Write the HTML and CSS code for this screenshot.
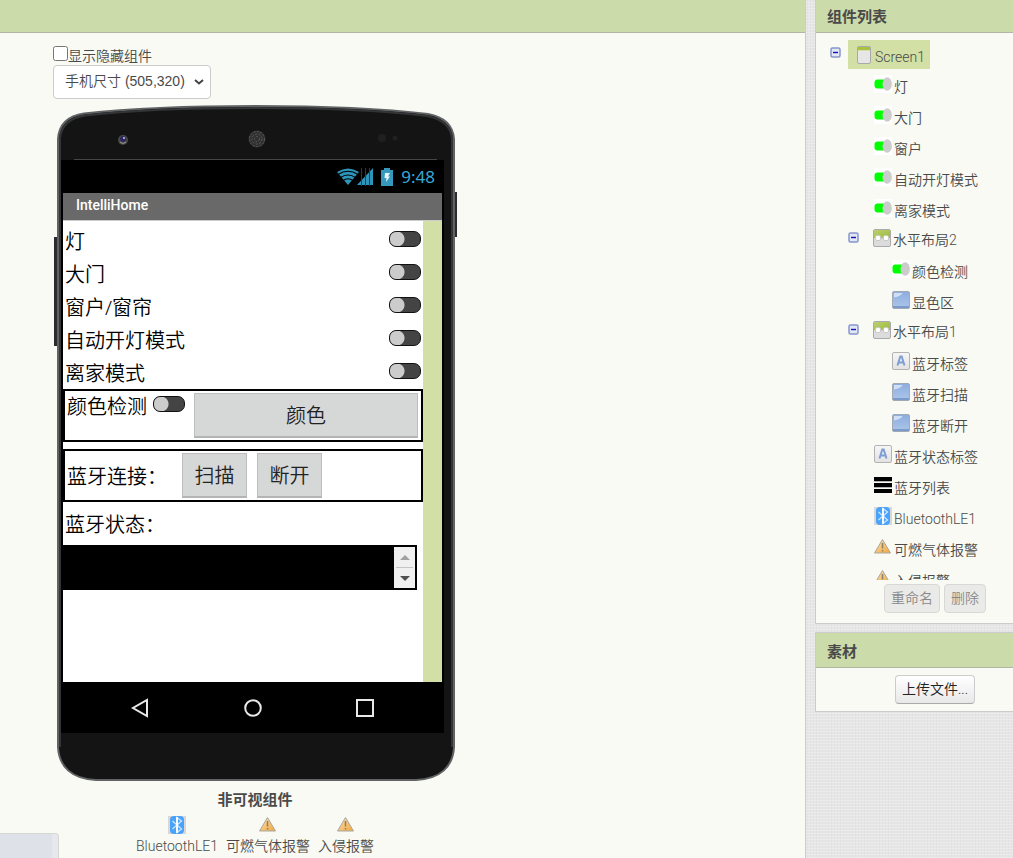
FILE: index.html
```html
<!DOCTYPE html>
<html lang="zh-CN">
<head>
<meta charset="utf-8">
<title>IntelliHome</title>
<link rel="stylesheet" href="styles.css">
</head>
<body>
<svg class="defs" aria-hidden="true">
  <defs>
    <linearGradient id="g-blue" x1="0" y1="0" x2="0" y2="1"><stop offset="0" stop-color="#8dade0"/><stop offset="1" stop-color="#acc6e8"/></linearGradient>
    <linearGradient id="g-green" x1="0" y1="0" x2="1" y2="1"><stop offset="0" stop-color="#bccf74"/><stop offset="1" stop-color="#9cbc35"/></linearGradient>
    <linearGradient id="g-warn" x1="0" y1="0" x2="1" y2="1"><stop offset="0" stop-color="#fbe3b4"/><stop offset="1" stop-color="#f0a63c"/></linearGradient>
    <linearGradient id="g-label" x1="0" y1="0" x2="0" y2="1"><stop offset="0" stop-color="#f6f6f6"/><stop offset="1" stop-color="#e2e2e2"/></linearGradient>
  </defs>
  <symbol id="i-screen" viewBox="0 0 18 18"><rect x="2.5" y="0.5" width="13" height="17" rx="1.5" fill="#e6e6e6" stroke="#a9a9a9"/><path d="M3 1h12v3H3z" fill="#a9c23f"/><path d="M3 4h12v1H3z" fill="#d6dfb0"/></symbol>
  <symbol id="i-switch" viewBox="0 0 18 18"><path d="M0 0h18v18H0z" fill="#fff"/><rect x="0.5" y="4.500" width="14" height="9" rx="3" fill="#0f0"/><ellipse cx="13.200" cy="9" rx="4.700" ry="6.700" fill="#ccc"/></symbol>
  <symbol id="i-layout" viewBox="0 0 18 18"><rect x="0.5" y="0.5" width="17" height="17" rx="1.500" fill="#dcdcdc" stroke="#aaa"/><path d="M1 1h16v8H1z" fill="url(#g-green)"/><rect x="2.500" y="6.500" width="5" height="5" rx="1.500" fill="#fff" stroke="#c9c9c9"/><rect x="10.500" y="6.500" width="5" height="5" rx="1.500" fill="#fff" stroke="#c9c9c9"/><path d="M8 9h2" stroke="#bbb"/></symbol>
  <symbol id="i-button" viewBox="0 0 18 18"><rect x="0.5" y="0.5" width="17" height="17" rx="1.500" fill="url(#g-blue)" stroke="#a2a9b4"/><path d="M2 2h8.500Q9 5 2 6.500z" fill="#cfdff5"/><path d="M1 15h16v2H1z" fill="#7b9bcd"/></symbol>
  <symbol id="i-label" viewBox="0 0 18 18"><rect x="0.5" y="0.5" width="17" height="17" rx="1.500" fill="url(#g-label)" stroke="#b3b3b3"/><path d="M5.500 13.500L8.300 4.500h1.400l2.800 9M6.500 10.500h5" fill="none" stroke="#7f9fd4" stroke-width="2"/></symbol>
  <symbol id="i-list" viewBox="0 0 18 18"><path d="M0 1h18v4H0zM0 7h18v4H0zM0 13h18v4H0z"/><path d="M0 5h18v1H0zM0 11h18v1H0z" fill="#b5b5b5"/></symbol>
  <symbol id="i-bt" viewBox="0 0 18 18"><path d="M0 0h18v18H0z" fill="#d8d8d8"/><rect x="2" y="0" width="14" height="18" rx="4" fill="#4aa3fb"/><path d="M4.500 5l9 8L9 16.500V1.500L13.500 5l-9 8" fill="none" stroke="#cde5ff" stroke-width="1.300"/><path d="M9 1v16" stroke="#fff" stroke-width="1.800"/></symbol>
  <symbol id="i-warn" viewBox="0 0 18 18"><path d="M8.500 1.500l8 13.500H0.500z" fill="url(#g-warn)" stroke="#aaa69f" stroke-linejoin="round"/><path d="M8.500 5v5.500M8.500 12v1.500" stroke="#8c8068" stroke-width="1.500"/></symbol>
  <symbol id="i-minus" viewBox="0 0 11 11"><rect x="1" y="1" width="9" height="9" rx="1.500" fill="#e3e7f5" stroke="#8795cb" stroke-width="1.500"/><path d="M3 5.500h5" stroke="#1212b8" stroke-width="1.400"/></symbol>
</svg>

<div class="workspace">
  <main class="viewer">
    <header class="panel-head"></header>
    <div class="canvas">
      <label class="show-hidden"><input type="checkbox"><span>显示隐藏组件</span></label>
      <div class="select-wrap">
        <select class="size-select" aria-label="手机尺寸"><option>手机尺寸 (505,320)</option></select>
        <svg class="chevron" viewBox="0 0 10 6" aria-hidden="true"><path d="M1 1l4 3.500L9 1" fill="none" stroke="#444" stroke-width="2"/></svg>
      </div>

      <div class="phone">
        <svg class="phone-frame" viewBox="0 0 404 676" preserveAspectRatio="none" aria-hidden="true">
          <path d="M1 132h5v109H1zM400 87h4v45h-4z" fill="#2b2b2d"/>
          <path d="M5 34C6 20 14 11 31 8.500C80 3 140 1 202 1C264 1 325 3 375 9C391 12 400 20 401 34V642C400 662 387 674 363 675H43C19 674 6 662 5 642Z" fill="#141414" stroke="#606264" stroke-width="2"/>
          <path d="M7 34C8 21 16 13 32 10.500C80 5 140 3 202 3C264 3 325 5 374 11C389 14 398 21 399 34V642" fill="none" stroke="#343537" stroke-width="2"/>
          <path d="M7 34V642" stroke="#343537" stroke-width="2"/>
          <circle cx="70" cy="35" r="5" fill="#4c4845"/><circle cx="70" cy="34" r="3" fill="#29295e"/><circle cx="71" cy="33" r="1" fill="#c8c8f4"/><path d="M67 37q3 3 6 0" stroke="#999" fill="none"/>
          <circle cx="204" cy="34" r="8.500" fill="#303030"/><g fill="none" stroke="#5c5c5c" stroke-dasharray="2 1.500"><circle cx="204" cy="34" r="7.500"/><circle cx="204" cy="34" r="5"/><circle cx="204" cy="34" r="2.500"/></g>
          <circle cx="329" cy="33" r="4" fill="#202020"/><circle cx="342" cy="33" r="2.500" fill="#202020"/>
          <path d="M21 54.500h363" stroke="#464646"/>
        </svg>
        <div class="display">
          <div class="status">
            <svg width="36" height="18" viewBox="0 0 36 18" aria-hidden="true"><path d="M0 4Q11-3 22 4L11 17Z" fill="#2f94ba"/><path d="M1 6.500q10-6.500 20 0M3.500 9.500q7.500-5 15 0M6 12.500q5-3.500 10 0" fill="none" stroke="#000" stroke-width="1.100"/><path d="M36 0v17H20Z" fill="#2f94ba"/><path d="M24.500 0v18M28.500 0v18M32.500 0v18" stroke="#0e4558"/></svg>
            <svg width="12" height="18" viewBox="0 0 12 18" aria-hidden="true"><path d="M0 2h3V0h6v2h3v16H0z" fill="#3798bd"/><path d="M4 5h5L7 8.500h2L5 14l.5-4H3.500z" fill="#e5f6fc"/></svg>
            <span>9:48</span>
          </div>
          <div class="app">
            <div class="app-title">IntelliHome</div>
            <div class="app-body">
              <div class="rows">
                <label class="row">灯<input class="toggle" type="checkbox" role="switch"></label>
                <label class="row">大门<input class="toggle" type="checkbox" role="switch"></label>
                <label class="row">窗户/窗帘<input class="toggle" type="checkbox" role="switch"></label>
                <label class="row">自动开灯模式<input class="toggle" type="checkbox" role="switch"></label>
                <label class="row">离家模式<input class="toggle" type="checkbox" role="switch"></label>
                <div class="box">
                  <label class="detect"><span>颜色检测</span><input class="toggle" type="checkbox" role="switch"></label>
                  <button class="droid wide" type="button">颜色</button>
                </div>
                <div class="box">
                  <span class="link-label">蓝牙连接：</span>
                  <button class="droid" type="button">扫描</button>
                  <button class="droid" type="button">断开</button>
                </div>
                <div class="bt-state">蓝牙状态：</div>
                <div class="bt-list">
                  <div class="spinner">
                    <button type="button" aria-label="向上"><svg width="10" height="5" viewBox="0 0 10 5"><path d="M5 0l5 5H0z" fill="#a0a0a0"/></svg></button>
                    <button type="button" aria-label="向下"><svg width="10" height="5" viewBox="0 0 10 5"><path d="M0 0h10L5 5z" fill="#505050"/></svg></button>
                  </div>
                </div>
              </div>
            </div>
          </div>
          <div class="nav">
            <svg width="18" height="20" viewBox="0 0 18 20" aria-hidden="true"><path d="M16 2v16L2 10z" fill="none" stroke="#e8e8e8" stroke-width="2"/></svg>
            <svg width="18" height="20" viewBox="0 0 18 20" aria-hidden="true"><circle cx="9" cy="10" r="7.800" fill="none" stroke="#e8e8e8" stroke-width="2"/></svg>
            <svg width="18" height="20" viewBox="0 0 18 20" aria-hidden="true"><rect x="1" y="2" width="16" height="16" fill="none" stroke="#e8e8e8" stroke-width="2"/></svg>
          </div>
        </div>
      </div>

      <section class="hidden-parts">
        <h2>非可视组件</h2>
        <ul>
          <li><svg class="icon"><use href="#i-bt"/></svg>BluetoothLE1</li>
          <li><svg class="icon"><use href="#i-warn"/></svg>可燃气体报警</li>
          <li><svg class="icon"><use href="#i-warn"/></svg>入侵报警</li>
        </ul>
      </section>
    </div>
  </main>

  <aside class="side">
    <section class="panel">
      <header class="panel-head"><h2>组件列表</h2></header>
      <div class="tree">
        <div class="node root"><button class="fold" type="button" aria-label="收起"><svg><use href="#i-minus"/></svg></button><a class="selected" href="#"><svg class="icon"><use href="#i-screen"/></svg><span>Screen1</span></a></div>
        <ul>
          <li><a class="node" href="#"><svg class="icon"><use href="#i-switch"/></svg><span>灯</span></a></li>
          <li><a class="node" href="#"><svg class="icon"><use href="#i-switch"/></svg><span>大门</span></a></li>
          <li><a class="node" href="#"><svg class="icon"><use href="#i-switch"/></svg><span>窗户</span></a></li>
          <li><a class="node" href="#"><svg class="icon"><use href="#i-switch"/></svg><span>自动开灯模式</span></a></li>
          <li><a class="node" href="#"><svg class="icon"><use href="#i-switch"/></svg><span>离家模式</span></a></li>
          <li>
            <div class="node group"><button class="fold" type="button" aria-label="收起"><svg><use href="#i-minus"/></svg></button><a href="#"><svg class="icon"><use href="#i-layout"/></svg><span>水平布局2</span></a></div>
            <ul>
              <li><a class="node" href="#"><svg class="icon"><use href="#i-switch"/></svg><span>颜色检测</span></a></li>
              <li><a class="node" href="#"><svg class="icon"><use href="#i-button"/></svg><span>显色区</span></a></li>
            </ul>
          </li>
          <li>
            <div class="node group"><button class="fold" type="button" aria-label="收起"><svg><use href="#i-minus"/></svg></button><a href="#"><svg class="icon"><use href="#i-layout"/></svg><span>水平布局1</span></a></div>
            <ul>
              <li><a class="node" href="#"><svg class="icon"><use href="#i-label"/></svg><span>蓝牙标签</span></a></li>
              <li><a class="node" href="#"><svg class="icon"><use href="#i-button"/></svg><span>蓝牙扫描</span></a></li>
              <li><a class="node" href="#"><svg class="icon"><use href="#i-button"/></svg><span>蓝牙断开</span></a></li>
            </ul>
          </li>
          <li><a class="node" href="#"><svg class="icon"><use href="#i-label"/></svg><span>蓝牙状态标签</span></a></li>
          <li><a class="node" href="#"><svg class="icon"><use href="#i-list"/></svg><span>蓝牙列表</span></a></li>
          <li><a class="node" href="#"><svg class="icon"><use href="#i-bt"/></svg><span>BluetoothLE1</span></a></li>
          <li><a class="node" href="#"><svg class="icon"><use href="#i-warn"/></svg><span>可燃气体报警</span></a></li>
          <li><a class="node" href="#"><svg class="icon"><use href="#i-warn"/></svg><span>入侵报警</span></a></li>
        </ul>
      </div>
      <div class="actions tree-actions">
        <button class="btn" type="button" disabled>重命名</button>
        <button class="btn" type="button" disabled>删除</button>
      </div>
    </section>
    <section class="panel media">
      <header class="panel-head"><h2>素材</h2></header>
      <div class="actions media-actions"><button class="btn" type="button">上传文件...</button></div>
    </section>
  </aside>
</div>
<div class="status-tip"></div>
</body>
</html>
```

FILE: styles.css
```css
* { box-sizing: border-box; }

body {
  margin: 0;
  background-color: #e6e6e6;
  background-image:
    repeating-linear-gradient(0deg, rgba(255,255,255,.25) 0 1px, transparent 1px 3px),
    repeating-linear-gradient(90deg, rgba(200,200,200,.15) 0 1px, transparent 1px 3px);
  color: #4a4a4a;
  font: 14px/20px Roboto, "Noto Sans CJK SC", sans-serif;
  font-weight: 350;
}

button, input, select { font: inherit; color: inherit; margin: 0; }
a { color: inherit; text-decoration: none; }
ul { list-style: none; margin: 0; padding: 0; }
h2 { margin: 0; font-size: 15px; line-height: 20px; font-weight: 700; }
svg { display: block; flex: none; }
.defs { position: absolute; width: 0; height: 0; }
.icon { width: 18px; height: 18px; }

.workspace { display: flex; gap: 9px; min-height: 100vh; }

.viewer { flex: 1; background: #f8faf3; border-right: 1px solid #ccc; }

.panel-head {
  min-height: 33px;
  padding: 7px 11px 5px;
  background: #cbdba9;
  border-bottom: 1px solid #b0b5a4;
}

.canvas { display: flex; flex-direction: column; align-items: flex-start; padding: 12px 53px 0; }

.show-hidden { display: flex; align-items: flex-start; height: 20px; }
.show-hidden input { width: 15px; height: 15px; margin-top: 1px; }
.show-hidden span { padding-top: 1px; }

.select-wrap { position: relative; }
.size-select {
  appearance: none;
  width: 158px;
  height: 34px;
  padding: 0 24px 2px 11px;
  border: 1px solid #ccc;
  border-radius: 4px;
  background: #fff;
  font-family: "Liberation Sans", "Noto Sans CJK SC", sans-serif;
}
.chevron { position: absolute; right: 7px; top: 14px; width: 10px; height: 6px; pointer-events: none; }

.phone { position: relative; width: 404px; padding: 55px 13px 48px 8px; margin-top: 6px; }
.phone-frame { position: absolute; inset: 0; width: 100%; height: 100%; }

.display {
  position: relative;
  background: #000;
  color: #000;
  font: 20px/30px "Noto Sans", "Noto Sans CJK SC", sans-serif;
  font-weight: 350;
}
.status {
  display: flex;
  align-items: center;
  justify-content: flex-end;
  gap: 8px;
  height: 33px;
  padding-right: 9px;
  color: #36a9d6;
  font-size: 17px;
  font-weight: 400;
}
.app { margin: 0 2px; }
.app-title {
  height: 28px;
  padding: 2px 13px;
  background: #696969;
  border-bottom: 1px solid #ccc;
  color: #fff;
  font: 500 14px/20px Roboto, sans-serif;
}
.app-body { background: #d2e0a6; padding-right: 19px; }
.rows { min-height: 461px; padding-top: 2px; background: #fff; }
.row { display: flex; align-items: center; justify-content: space-between; height: 33px; padding: 4px 2px 0; }

.toggle {
  appearance: none;
  width: 32px;
  height: 16px;
  border: 1px solid #111;
  border-radius: 7px;
  background: radial-gradient(circle at 7px 7px, #ccc 7px, #444 8px);
}
.row .toggle { margin-bottom: 6px; }

.box {
  display: flex;
  align-items: center;
  height: 53px;
  margin-top: 1px;
  padding: 0 3px 0 2px;
  border: 2px solid #000;
}
.box + .box { margin-top: 7px; }
.detect { display: flex; align-items: flex-start; align-self: flex-start; gap: 6px; margin-right: 9px; }
.detect span { padding-top: 1px; }
.detect .toggle { margin-top: 5px; }
.link-label { width: 115px; padding-top: 2px; white-space: nowrap; }
.droid {
  width: 65px;
  height: 45px;
  margin-right: 10px;
  padding: 2px 0 0;
  border: 1px solid #bdbdbd;
  border-bottom: 2px solid #b4b4b4;
  background: #d6d7d7;
  color: #222;
}
.droid.wide { flex: 1; margin-right: 0; }
.bt-state { height: 43px; padding: 8px 2px; }
.bt-list { display: flex; justify-content: flex-end; height: 45px; margin-right: 6px; padding: 2px; background: #000; }
.spinner { display: flex; flex-direction: column; width: 21px; padding: 0 2px; background: #f0f0f0; }
.spinner button {
  display: flex;
  flex: 1;
  align-items: center;
  justify-content: center;
  padding: 0;
  border: 0;
  background: none;
}
.spinner button + button { border-top: 1px solid #c4c4c4; }

.nav { display: flex; align-items: center; justify-content: space-between; height: 51px; padding: 0 70px; }

.hidden-parts { width: 404px; padding-top: 9px; text-align: center; }
.hidden-parts ul { display: flex; justify-content: center; gap: 8px; margin-top: 6px; }
.hidden-parts li { display: flex; flex-direction: column; align-items: center; gap: 2px; }

.side { display: flex; flex-direction: column; gap: 8px; width: 198px; }
.panel { background: #f8faf3; border: 1px solid #ccc; border-width: 0 0 1px 1px; }
.panel.media { border-top-width: 1px; }
.media .panel-head { min-height: 35px; padding-top: 9px; }

.tree { height: 547px; padding-top: 7px; overflow: hidden; white-space: nowrap; }
.tree a { display: flex; align-items: center; gap: 2px; }
.tree span { padding-top: 5px; }
.node { height: 31px; padding: 0 0 1px 58px; }
.node.root { display: flex; align-items: center; gap: 7px; height: 29px; padding: 0 0 0 14px; }
.node.group { display: flex; align-items: center; gap: 14px; height: 30px; padding: 0 0 3px 32px; }
.tree ul ul .node { padding-left: 76px; }
.selected { height: 29px; padding: 0 5px 0 7px; background: #d2e0a6; }
.fold { width: 11px; height: 11px; padding: 0; border: 0; background: none; }
.fold svg { width: 11px; height: 11px; }
.root .fold { margin-bottom: 4px; }

.actions { display: flex; justify-content: center; gap: 4px; padding-left: 41px; }
.tree-actions { padding-top: 4px; padding-bottom: 10px; }
.media-actions { padding-top: 7px; padding-bottom: 7px; }
.btn {
  height: 29px;
  padding: 0 6px 2px;
  border: 1px solid #ccc;
  border-bottom-color: #aaa;
  border-radius: 4px;
  background: linear-gradient(#fff, #e8e8e8);
  color: #222;
  white-space: nowrap;
}
.btn:disabled { background: #eaebe8; border-color: #d8d9d5; color: #888; }

.status-tip {
  position: fixed;
  left: 0;
  bottom: 0;
  width: 59px;
  height: 25px;
  border: 1px solid #d5d8d2;
  border-width: 1px 1px 0 0;
  border-top-right-radius: 4px;
  background: linear-gradient(90deg, #dee1e7 52px, #e6e8ee 52px);
}
```
